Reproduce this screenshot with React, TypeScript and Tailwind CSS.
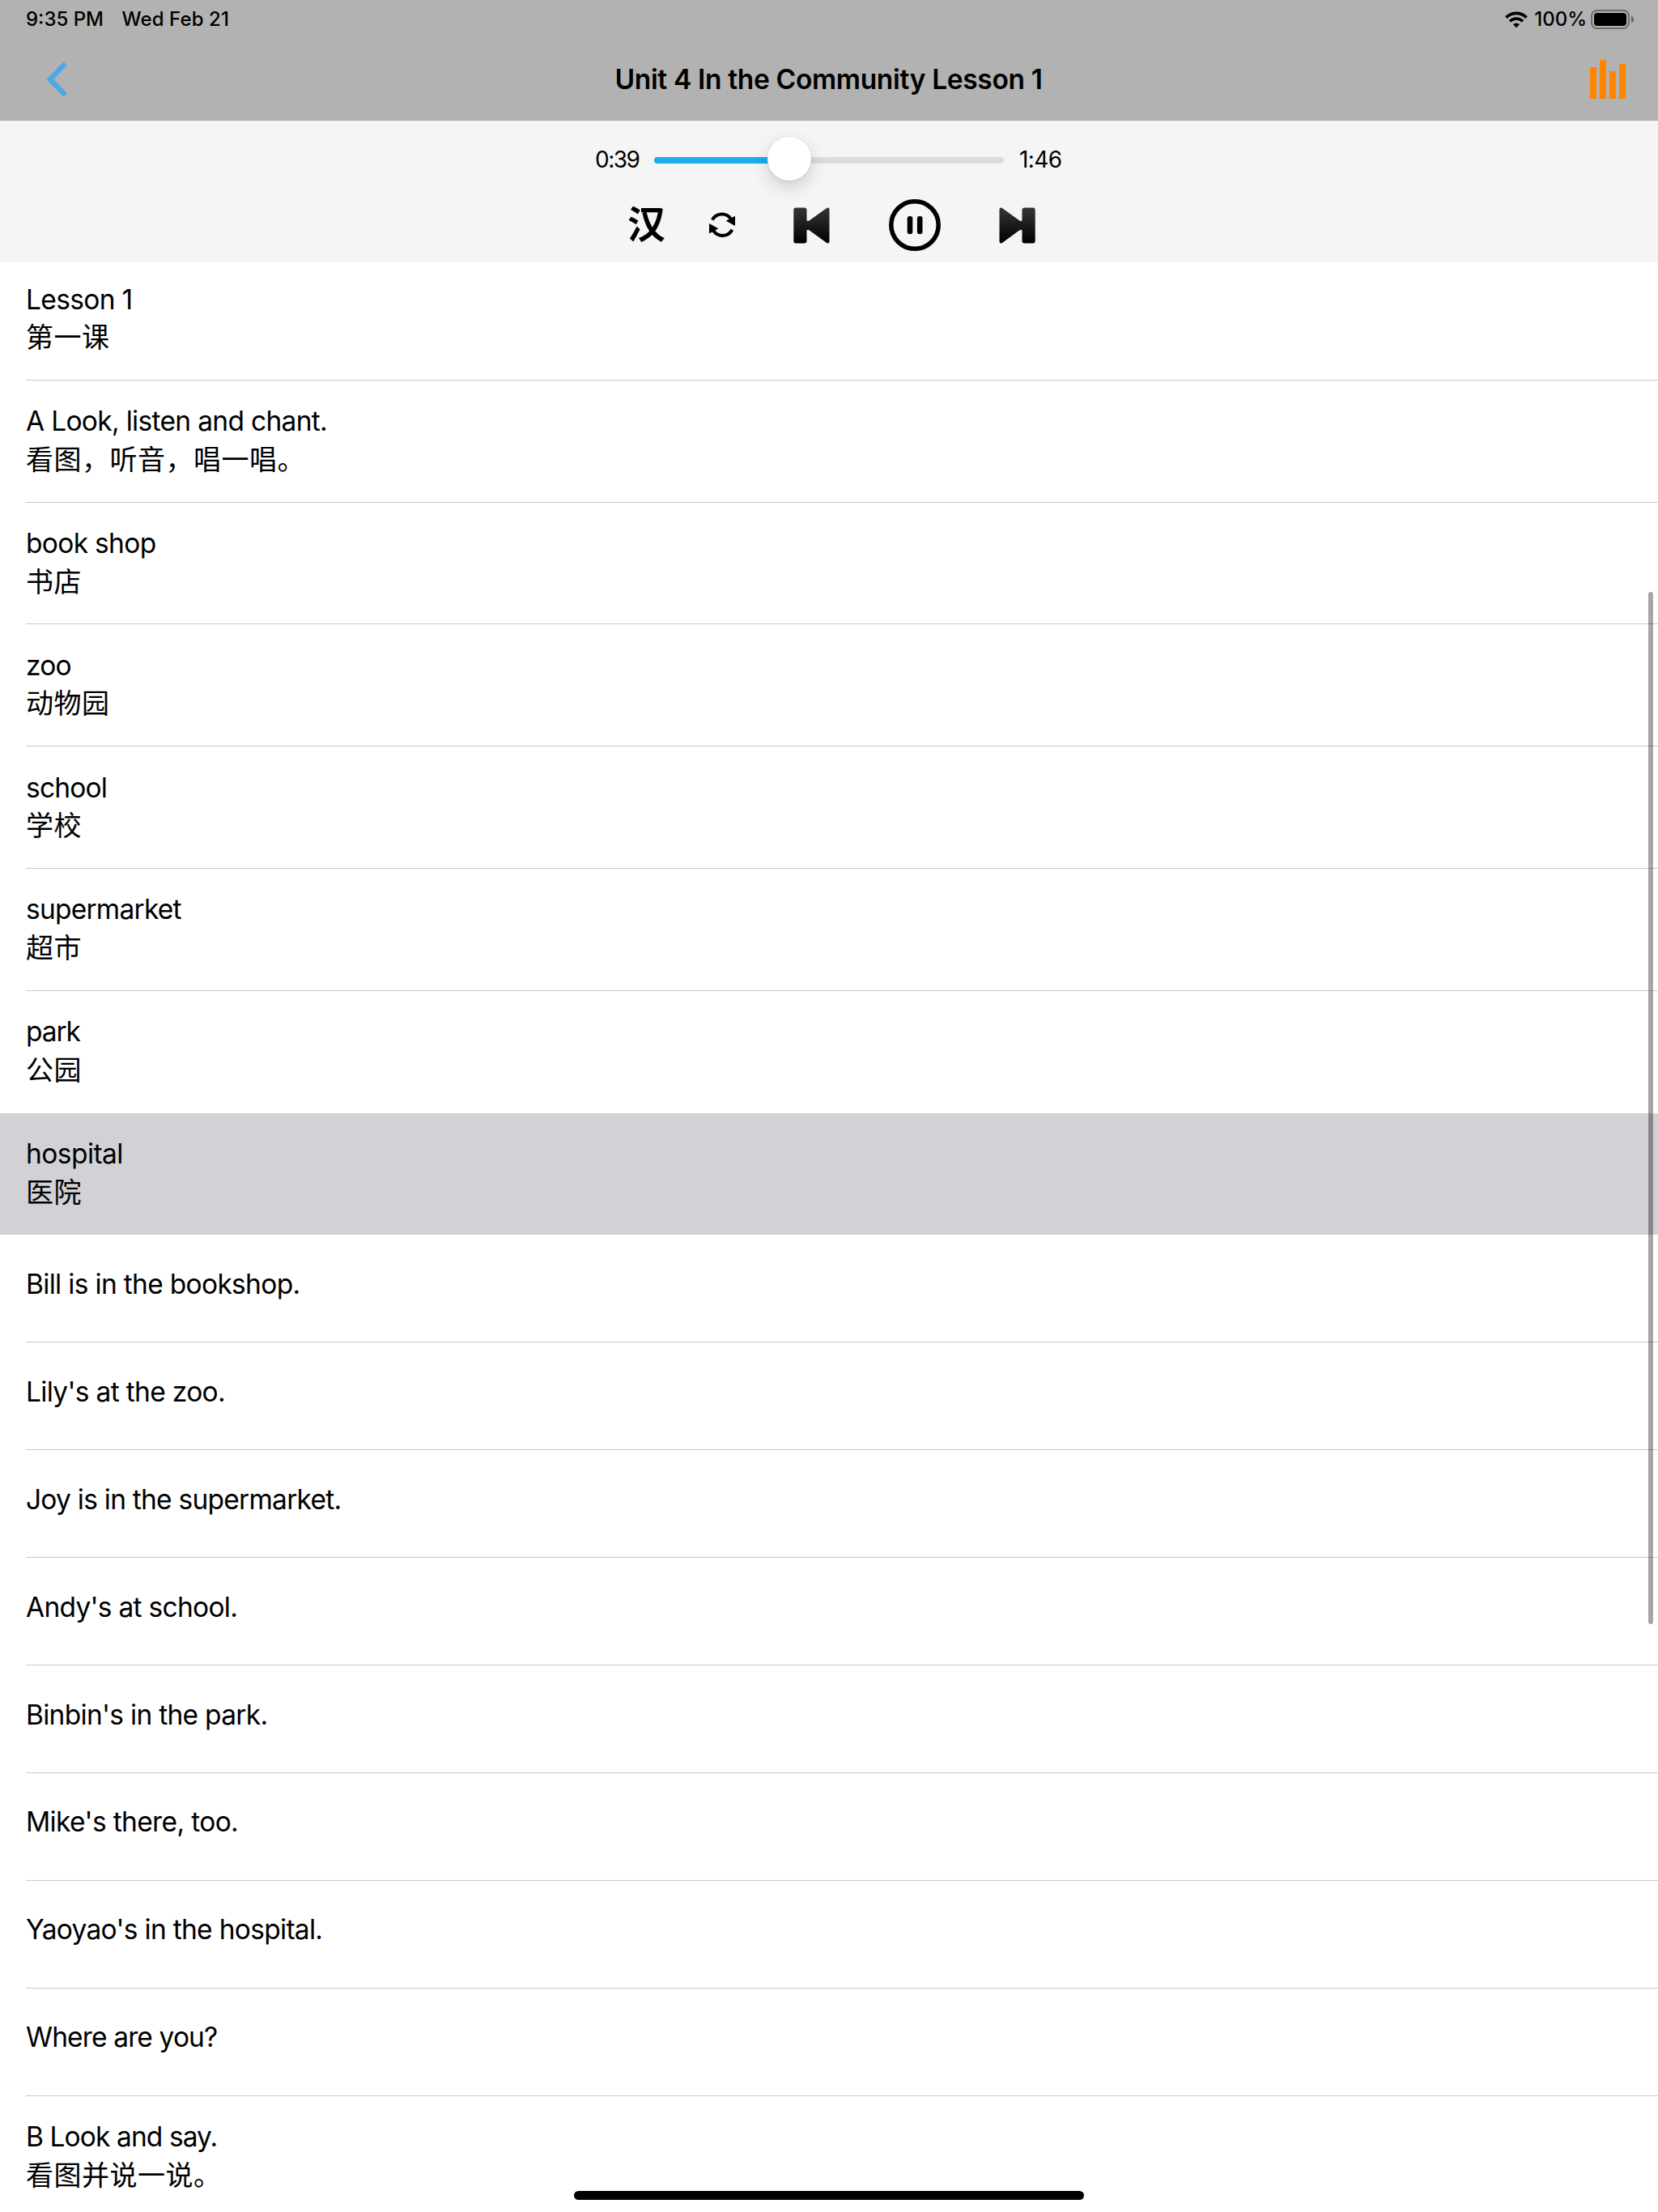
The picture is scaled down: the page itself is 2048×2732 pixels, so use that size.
type Line = { en: string; zh?: string; track: string; active?: boolean };

const LINES: Line[] = [
  { en: "Lesson 1", zh: "第一课", track: "tracking-[-0.65px]" },
  { en: "A Look, listen and chant.", zh: "看图，听音，唱一唱。", track: "tracking-[-0.68px]" },
  { en: "book shop", zh: "书店", track: "tracking-[-0.68px]" },
  { en: "zoo", zh: "动物园", track: "tracking-[-0.8px]" },
  { en: "school", zh: "学校", track: "tracking-[-0.8px]" },
  { en: "supermarket", zh: "超市", track: "tracking-[-0.76px]" },
  { en: "park", zh: "公园", track: "tracking-[-1.1px]" },
  { en: "hospital", zh: "医院", track: "tracking-[-0.55px]", active: true },
  { en: "Bill is in the bookshop.", track: "tracking-[-0.68px]" },
  { en: "Lily's at the zoo.", track: "tracking-[-0.67px]" },
  { en: "Joy is in the supermarket.", track: "tracking-[-0.75px]" },
  { en: "Andy's at school.", track: "tracking-[-0.72px]" },
  { en: "Binbin's in the park.", track: "tracking-[-0.71px]" },
  { en: "Mike's there, too.", track: "tracking-[-0.64px]" },
  { en: "Yaoyao's in the hospital.", track: "tracking-[-0.7px]" },
  { en: "Where are you?", track: "tracking-[-0.86px]" },
  { en: "B Look and say.", zh: "看图并说一说。", track: "tracking-[-0.9px]" },
];

function WifiIcon() {
  return (
    <svg width="28" height="21" viewBox="0 0 28 21" fill="none" stroke="#000">
      <path d="M1.5 7.6A17.6 17.6 0 0 1 26.5 7.6" strokeWidth="3.8" />
      <path d="M6 12.3A11.2 11.2 0 0 1 22 12.3" strokeWidth="3.6" />
      <path d="M10 16a6 6 0 0 1 8 0L14 20.2Z" fill="#000" stroke="none" />
    </svg>
  );
}

function BatteryIcon() {
  return (
    <svg width="54" height="24" viewBox="0 0 54 24">
      <rect x="1" y="1" width="46" height="22" rx="6.5" fill="none" stroke="#6c6c6c" strokeWidth="2" />
      <rect x="4" y="4" width="40" height="16" rx="4" fill="#000" />
      <path d="M50 7.5c2 .8 3.2 2.500 3.200 4.500s-1.200 3.700-3.200 4.500Z" fill="#6c6c6c" />
    </svg>
  );
}

function StatusBar() {
  return (
    <div className="flex h-[48px] items-center justify-between pl-[32px] pr-[29px] text-[24px] font-medium leading-[46px]">
      <div className="flex gap-[22.5px] pb-[1px]">
        <span>9:35 PM</span>
        <span className="tracking-[0.1px]">Wed Feb 21</span>
      </div>
      <div className="flex items-center">
        <WifiIcon />
        <span className="ml-[8px] mr-[5px] pb-[1px]">100%</span>
        <BatteryIcon />
      </div>
    </div>
  );
}

function NavBar() {
  return (
    <div className="grid h-[100px] grid-cols-[1fr_auto_1fr] items-center pl-[57px] pr-[40px]">
      <svg width="28" height="46" viewBox="0 0 28 46" fill="none">
        <path d="M23.700 3.500L4.800 23L23.700 42.500" stroke="#4aaae8" strokeWidth="6.200" />
      </svg>
      <h1 className="-ml-[18px] pt-[2px] text-[33.5px] font-semibold leading-none tracking-[-0.33px]">Unit 4 In the Community Lesson 1</h1>
      <svg width="44" height="48" viewBox="0 0 44 48" fill="#ff8400" className="justify-self-end">
        <rect x="0" y="9" width="8" height="39" />
        <rect x="12" y="0" width="8" height="48" />
        <rect x="24" y="14" width="8" height="34" />
        <rect x="36" y="5" width="8" height="43" />
      </svg>
    </div>
  );
}

function SkipIcon({ flip = false }: { flip?: boolean }) {
  const id = flip ? "skip-next" : "skip-prev";
  return (
    <svg width="45" height="45" viewBox="0 0 45 45" className={flip ? "-scale-x-100" : ""}>
      <defs>
        <linearGradient id={id} x1="0" y1="0" x2="0" y2="1">
          <stop offset="0" stopColor="#363636" />
          <stop offset="1" stopColor="#000" />
        </linearGradient>
      </defs>
      <path
        d="M3 0.500H13.500Q16.500 0.500 16.500 3.500V16.200Q17.500 17.600 19.500 16.400L41.500 0.800Q44.500 -0.200 44.500 3V42Q44.500 45.200 41.500 44.200L19.500 28.200Q17.500 27 16.500 28.400V41.500Q16.500 44.500 13.500 44.500H3Q0.300 44.500 0.300 41.500V3.500Q0.300 0.500 3 0.500Z"
        fill={`url(#${id})`}
      />
    </svg>
  );
}

function RepeatIcon() {
  return (
    <svg width="32" height="31" viewBox="0 0 32 31">
      <path d="M3.800 9.500A13.600 13.600 0 0 1 27 8.500" fill="none" stroke="#000" strokeWidth="4" />
      <path d="M32 4.700V16.900L20.800 10.700Z" />
      <path d="M28.400 21.700A13.600 13.600 0 0 1 5 22.700" fill="none" stroke="#000" strokeWidth="4" />
      <path d="M0 26.400V14.100L11.300 20.300Z" />
    </svg>
  );
}

function PauseIcon() {
  return (
    <svg width="64" height="64" viewBox="0 0 64 64">
      <circle cx="32" cy="32" r="29.200" fill="none" stroke="#000" strokeWidth="5.600" />
      <rect x="22.700" y="21" width="6.600" height="22" rx="2.800" />
      <rect x="34.900" y="21" width="6.600" height="22" rx="2.800" />
    </svg>
  );
}

function Player() {
  return (
    <div className="h-[175px] bg-[#f5f5f5] pt-[20px]">
      <div className="mx-auto flex h-[54px] w-[578px] items-center text-[28px] leading-none">
        <span className="w-[73px] pt-[2px] tracking-[-1.5px]">0:39</span>
        <div className="relative mt-[4px] h-[8px] w-[432px] rounded-full bg-[#dcdcde]">
          <div className="h-full w-[39%] rounded-full bg-[#1eadea]" />
          <div className="absolute left-[140px] top-[-25px] size-[54px] rounded-full bg-white shadow-[0_8px_22px_rgba(0,0,0,0.16),0_1px_4px_rgba(0,0,0,0.08)]" />
        </div>
        <span className="ml-[19px] pt-[2px] tracking-[-0.6px]">1:46</span>
      </div>
      <div className="ml-[775px] mt-[23px] flex h-[64px] items-center">
        <span className="-mt-[9px] w-[47px] text-[47px] font-bold leading-[64px] blur-[0.7px] font-['Noto_Sans_CJK_SC',sans-serif]">汉</span>
        <div className="-mt-[2px] ml-[54px]"><RepeatIcon /></div>
        <div className="ml-[72px]"><SkipIcon /></div>
        <div className="ml-[73px]"><PauseIcon /></div>
        <div className="ml-[72px]"><SkipIcon flip /></div>
      </div>
    </div>
  );
}

function Row({ line, last, beforeActive }: { line: Line; last: boolean; beforeActive: boolean }) {
  const height = line.zh ? "h-[150.8px] pt-[27.5px]" : "h-[132.92px] pt-[37.5px]";
  const rule = line.active || beforeActive || last ? "border-transparent" : "border-[#c8c8ca]";
  return (
    <li className={line.active ? "bg-[#d1d1d6] pl-[32px]" : "pl-[32px]"}>
      <div className={`border-b text-[33.5px] leading-[47px] ${height} ${rule}`}>
        <p className={line.track}>{line.en}</p>
        {line.zh && <p className="-mt-[2.5px] text-[34px] tracking-[0.5px] font-['Noto_Sans_CJK_SC',sans-serif]">{line.zh}</p>}
      </div>
    </li>
  );
}

export default function App() {
  return (
    <div className="relative flex h-[2732px] w-[2048px] flex-col overflow-hidden bg-white font-['Inter','Noto_Sans_CJK_SC',sans-serif] text-black">
      <header className="h-[149px] shrink-0 border-b border-[#a6a6a6] bg-[#b2b2b2]">
        <StatusBar />
        <NavBar />
      </header>
      <Player />
      <main className="min-h-0 flex-1 overflow-hidden">
        <ul className="-mt-[5px]">
          {LINES.map((line, i) => (
            <Row key={line.en} line={line} last={i === LINES.length - 1} beforeActive={!!LINES[i + 1]?.active} />
          ))}
        </ul>
      </main>
      <div className="absolute left-[2036px] top-[731px] h-[1275px] w-[6px] rounded-full bg-black/35" />
      <div className="absolute left-[709px] top-[2706px] h-[11px] w-[630px] rounded-full bg-black" />
    </div>
  );
}
